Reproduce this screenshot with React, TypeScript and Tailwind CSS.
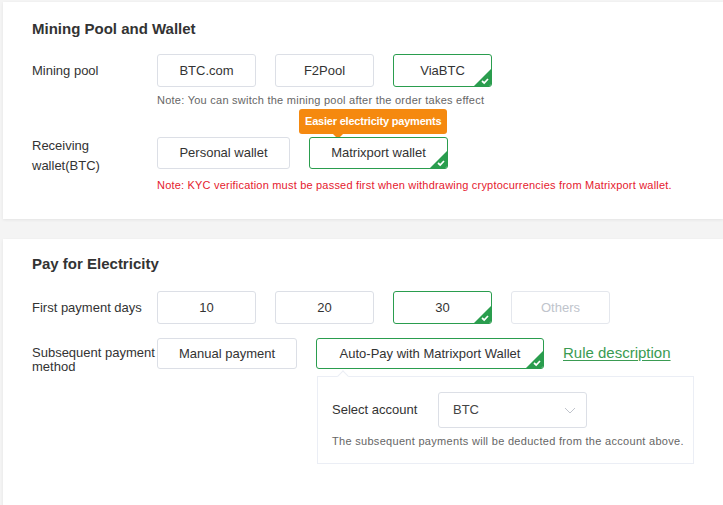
const Corner = () => (
  <svg className="absolute right-0 bottom-0" width="17" height="17" viewBox="0 0 17 17">
    <polygon points="17,0 17,17 0,17" fill="#2a9d4e" />
    <polyline points="8,12 10.2,14 14,10" fill="none" stroke="#fff" strokeWidth="1.7" />
  </svg>
);

type OptProps = {
  label: string;
  size: string;
  active?: boolean;
  disabled?: boolean;
};

const Option = ({ label, size, active, disabled }: OptProps) => {
  let tone = "border-[#dcdfe6] text-[#333]";
  if (active) tone = "border-[#2a9d4e] text-[#333]";
  if (disabled) tone = "border-[#e4e7ed] text-[#c0c4cc]";
  return (
    <div
      className={`relative flex items-center justify-center overflow-hidden rounded-[3px] border bg-white text-[13px] ${tone} ${size}`}
    >
      {label}
      {active && <Corner />}
    </div>
  );
};

const App = () => {
  return (
    <div className="min-h-[505px] bg-[#f4f4f4] pl-[3px] pt-[2px] font-['Liberation_Sans',Arial,sans-serif] text-[#333]">
      {/* mining pool and wallet */}
      <div className="bg-white px-[29px] pt-[17px] pb-[26px] shadow-[0_1px_3px_rgba(0,0,0,0.07)]">
        <h2 className="text-[15px] font-bold leading-5 text-[#333]">Mining Pool and Wallet</h2>

        <div className="mt-[15px] flex items-center">
          <div className="w-[125px] shrink-0 text-[13px]">Mining pool</div>
          <div className="flex gap-[19px]">
            <Option label="BTC.com" size="w-[99px] h-[33px]" />
            <Option label="F2Pool" size="w-[99px] h-[33px]" />
            <Option label="ViaBTC" size="w-[99px] h-[33px]" active />
          </div>
        </div>
        <p className="ml-[125px] mt-[5px] text-[11px] leading-4 tracking-[0.25px] text-[#666]">
          Note: You can switch the mining pool after the order takes effect
        </p>

        <div className="mt-[29px] flex h-[32px] items-start">
          <div className="mt-[-1px] w-[125px] shrink-0 pr-8 text-[13px] leading-5">Receiving wallet(BTC)</div>
          <div className="flex gap-[19px]">
            <Option label="Personal wallet" size="w-[133px] h-[32px]" />
            <div className="relative">
              <div className="absolute bottom-[35px] left-[-10px] whitespace-nowrap rounded-[3px] bg-[#f5890f] px-[6px] text-[11px] font-bold leading-[25px] tracking-[-0.2px] text-white">
                Easier electricity payments
                <span className="absolute left-[34px] top-full h-0 w-0 border-x-[5px] border-t-[5px] border-x-transparent border-t-[#f5890f]" />
              </div>
              <Option label="Matrixport wallet" size="w-[139px] h-[32px]" active />
            </div>
          </div>
        </div>
        <p className="ml-[125px] mt-[8px] text-[11px] leading-4 tracking-[0.2px] text-[#e5202e]">
          Note: KYC verification must be passed first when withdrawing cryptocurrencies from Matrixport wallet.
        </p>
      </div>

      {/* pay for electricity */}
      <div className="mt-5 min-h-[267px] bg-white px-[29px] pt-[15px] pb-6 shadow-[0_1px_3px_rgba(0,0,0,0.07)]">
        <h2 className="text-[15px] font-bold leading-5 text-[#333]">Pay for Electricity</h2>

        <div className="mt-[17px] flex items-center">
          <div className="w-[125px] shrink-0 text-[13px]">First payment days</div>
          <div className="flex gap-[19px]">
            <Option label="10" size="w-[99px] h-[33px]" />
            <Option label="20" size="w-[99px] h-[33px]" />
            <Option label="30" size="w-[99px] h-[33px]" active />
            <Option label="Others" size="w-[99px] h-[33px]" disabled />
          </div>
        </div>

        <div className="mt-[14px] flex h-[31px] items-start">
          <div className="mt-[8px] w-[125px] shrink-0 whitespace-nowrap text-[13px] leading-[14px]">
            Subsequent payment
            <br />
            method
          </div>
          <div className="flex items-center gap-[19px]">
            <Option label="Manual payment" size="w-[140px] h-[31px]" />
            <Option label="Auto-Pay with Matrixport Wallet" size="w-[228px] h-[31px]" active />
            <a href="#" className="text-[15px] text-[#3a9b52] underline underline-offset-2">
              Rule description
            </a>
          </div>
        </div>

        <div className="relative ml-[285px] mt-[7px] w-[377px] border border-[#ebeef5] bg-white pl-[14px] pr-[8px] pt-[15px] pb-[14px]">
          <span className="absolute left-[21px] top-[-5px] h-2 w-2 rotate-45 border-l border-t border-[#ebeef5] bg-white" />
          <div className="flex items-center">
            <span className="w-[106px] text-[13px]">Select account</span>
            <div className="flex h-[36px] w-[149px] items-center justify-between rounded-[3px] border border-[#dcdfe6] pl-[14px] pr-[10px] text-[13px] text-[#444]">
              BTC
              <svg width="12" height="7" viewBox="0 0 12 7">
                <polyline points="1,1 6,6 11,1" fill="none" stroke="#c0c4cc" strokeWidth="1" />
              </svg>
            </div>
          </div>
          <p className="mt-[5px] whitespace-nowrap text-[11px] leading-4 tracking-[0.3px] text-[#666]">
            The subsequent payments will be deducted from the account above.
          </p>
        </div>
      </div>
    </div>
  );
};

export default App;
